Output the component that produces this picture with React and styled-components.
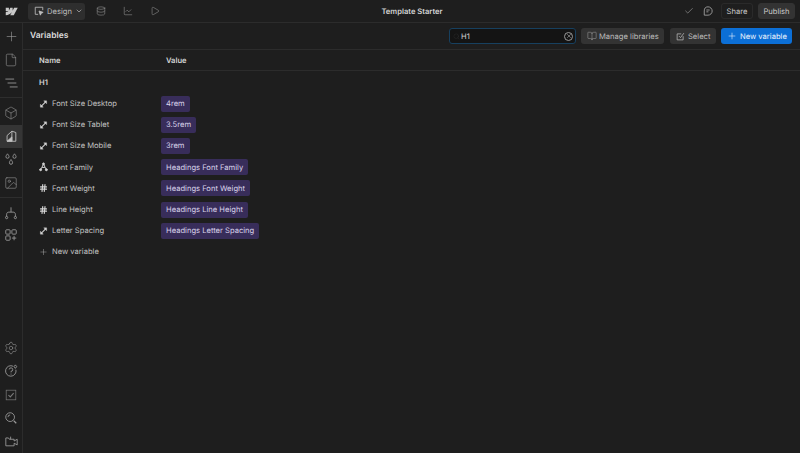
import styled, { createGlobalStyle } from "styled-components";
import {
  Plus,
  File,
  Box,
  Database,
  LineChart,
  Play,
  Check,
  BookOpen,
  ChevronDown,
  Hash,
  X,
  Search,
  Settings,
  Image,
} from "lucide-react";

const GlobalStyle = createGlobalStyle`
  html, body {
    margin: 0;
    padding: 0;
    background: #1e1e1e;
    overflow: hidden;
  }
  * {
    box-sizing: border-box;
  }
`;

const Page = styled.div`
  width: 800px;
  height: 453px;
  display: flex;
  flex-direction: column;
  background: #1e1e1e;
  color: #d9d9d9;
  font-family: Inter, "Liberation Sans", sans-serif;
  font-size: 7.6px;
  text-rendering: geometricPrecision;
`;

const TopBar = styled.header`
  height: 23px;
  display: flex;
  align-items: center;
  position: relative;
  flex-shrink: 0;
  border-bottom: 1px solid #2c2c2c;
`;

const LogoCell = styled.div`
  width: 23px;
  height: 22px;
  display: flex;
  align-items: center;
  justify-content: center;
  color: #c9c9c9;
`;

const DesignButton = styled.div`
  margin-left: 5px;
  width: 57px;
  height: 17px;
  border-radius: 3px;
  background: #2e2e2e;
  display: flex;
  align-items: center;
  gap: 3px;
  padding-left: 6px;
  color: #bdbdbd;
`;

const TopIcons = styled.div`
  display: flex;
  align-items: center;
  gap: 17px;
  margin-left: 11px;
  color: #a3a3a3;
`;

const Title = styled.div`
  position: absolute;
  left: 0;
  right: 0;
  padding-left: 24px;
  text-align: center;
  font-weight: 600;
  color: #d4d4d4;
`;

const TopRight = styled.div`
  margin-left: auto;
  display: flex;
  align-items: center;
  gap: 9px;
  color: #a8a8a8;
  padding-right: 5px;
`;

const PublishGroup = styled.div`
  display: flex;
  gap: 5px;
  margin-left: -1px;
`;

const TopButton = styled.div`
  height: 16px;
  width: ${(p) => p.$width};
  display: flex;
  align-items: center;
  justify-content: center;
  border: 1px solid ${(p) => (p.$filled ? "#333" : "#2a2a2a")};
  border-radius: 3px;
  background: ${(p) => (p.$filled ? "#333" : "transparent")};
  color: #c8c8c8;
`;

const Body = styled.div`
  flex: 1;
  display: flex;
  min-height: 0;
`;

const Sidebar = styled.nav`
  width: 23px;
  flex-shrink: 0;
  display: flex;
  flex-direction: column;
  border-right: 1px solid #2c2c2c;
  color: #9a9a9a;
`;

const SideGroup = styled.div`
  display: flex;
  flex-direction: column;
  padding: ${(p) => p.$pad || "0"};
  border-bottom: ${(p) => (p.$divider ? "1px solid #2e2e2e" : "none")};
  margin-top: ${(p) => (p.$bottom ? "auto" : "0")};
`;

const SideItem = styled.div`
  height: ${(p) => (p.$compact ? "22px" : "23.4px")};
  display: flex;
  align-items: center;
  justify-content: center;
  background: ${(p) => (p.$active ? "#353535" : "transparent")};
  color: ${(p) => (p.$active ? "#c4c4c4" : "inherit")};
`;

const Main = styled.main`
  flex: 1;
  display: flex;
  flex-direction: column;
  min-width: 0;
`;

const Toolbar = styled.div`
  height: 27px;
  display: flex;
  align-items: center;
  padding: 0 8px 0 7px;
  border-bottom: 1px solid #2c2c2c;
  flex-shrink: 0;
`;

const PanelTitle = styled.div`
  font-size: 8.5px;
  font-weight: 600;
  color: #dcdcdc;
  margin-right: auto;
`;

const SearchBox = styled.div`
  width: 127px;
  height: 16px;
  border: 1px solid #17405f;
  border-radius: 3px;
  background: #141414;
  display: flex;
  align-items: center;
  padding: 0 2px 0 3px;
  gap: 1px;
  color: #d4d4d4;
`;

const SearchText = styled.span`
  flex: 1;
`;

const ClearIcon = styled.span`
  width: 9px;
  height: 9px;
  border-radius: 50%;
  border: 1px solid #9a9a9a;
  display: flex;
  align-items: center;
  justify-content: center;
  color: #c9c9c9;
`;

const ToolButton = styled.div`
  width: ${(p) => p.$width};
  height: 16px;
  margin-left: ${(p) => p.$gap || "5px"};
  padding-left: 6px;
  display: flex;
  align-items: center;
  gap: ${(p) => p.$iconGap || "3px"};
  border-radius: 3px;
  background: ${(p) => (p.$primary ? "#0c6fd6" : "#333")};
  color: ${(p) => (p.$primary ? "#eef5fd" : "#bcbcbc")};
`;

const Table = styled.div`
  flex: 1;
  display: flex;
  flex-direction: column;
`;

const HeadRow = styled.div`
  height: 21px;
  display: grid;
  grid-template-columns: 127px 1fr;
  align-items: center;
  padding-left: 16px;
  font-weight: 600;
  color: #d4d4d4;
  border-bottom: 1px solid #2c2c2c;
`;

const GroupRow = styled.div`
  height: 22px;
  display: flex;
  align-items: center;
  padding-left: 16px;
  font-weight: 600;
  color: #d4d4d4;
`;

const Row = styled.div`
  height: 21.2px;
  display: grid;
  grid-template-columns: 122px 1fr;
  align-items: center;
  padding-left: 16px;
  color: #bdbdbd;
`;

const NameCell = styled.div`
  display: flex;
  align-items: center;
  gap: 4px;
  color: #c2c2c2;
`;

const IconSlot = styled.span`
  width: 9px;
  display: flex;
  align-items: center;
  justify-content: center;
  color: #d4d4d4;
`;

const Pill = styled.span`
  justify-self: start;
  height: 16px;
  display: flex;
  align-items: center;
  padding: 0 5px;
  border-radius: 2px;
  background: #382d5a;
  color: #d8d3ea;
`;

function WebflowLogo() {
  return (
    <svg width="13" height="9" viewBox="0 0 26 16" fill="currentColor">
      <path d="M25.5 0.5 17.5 15.5H10.4L13.6 9.4H13.4C10.8 12.8 6.9 15 1.5 15.5V9.5C1.5 9.5 5 9.3 7 7.2H1.5V0.5H7.8V6H8L10.6 0.5H15.3V6H15.5L18.2 0.5H25.5Z" />
    </svg>
  );
}

function DesignIcon() {
  return (
    <svg width="10" height="10" viewBox="0 0 12 12" fill="none" stroke="currentColor" strokeWidth="1">
      <path d="M5 10H1.5V1.5H10.5V5" />
      <path d="M6 6 11 7.6 8.8 8.8 7.6 11Z" fill="currentColor" />
    </svg>
  );
}

function CommentIcon() {
  return (
    <svg width="10" height="10" viewBox="0 0 12 12" fill="none" stroke="currentColor" strokeWidth="1">
      <path d="M6 1A5 5 0 1 1 6 11H1.5V6A4.5 5 0 0 1 6 1Z" />
      <path d="M4 4.8H8M4 7H6.5" />
    </svg>
  );
}

function SelectIcon() {
  return (
    <svg width="9" height="9" viewBox="0 0 12 12" fill="none" stroke="currentColor" strokeWidth="1">
      <path d="M9.5 5.5V10.5H1.5V2.5H7" />
      <path d="M4 5.5 6 7.5 10.5 1.5" />
    </svg>
  );
}

function ChecklistIcon() {
  return (
    <svg width="14" height="14" viewBox="0 0 16 16" fill="none" stroke="currentColor" strokeWidth="0.8" opacity="0.75">
      <rect x="2.5" y="2.5" width="11" height="11" />
      <path d="M5 8 7.2 10.2 11 5.8" strokeWidth="1.2" />
    </svg>
  );
}

function LibraryIcon() {
  return (
    <svg width="14" height="14" viewBox="0 0 16 16" fill="none" stroke="currentColor" strokeWidth="1">
      <path d="M9 2.5 13.5 4V14H3.5V7.5L9 2.5Z" />
      <path d="M9 2.5V14" />
      <path d="M3.5 14 9 9V14Z" fill="currentColor" />
    </svg>
  );
}

function DropsIcon() {
  return (
    <svg width="14" height="15" viewBox="0 0 16 16" fill="none" stroke="currentColor" strokeWidth="1">
      <path d="M4 1.5C5 3 5.8 3.8 5.8 4.8A1.8 1.8 0 0 1 2.2 4.8C2.2 3.8 3 3 4 1.5Z" />
      <path d="M12 1.5C13 3 13.8 3.8 13.8 4.8A1.8 1.8 0 0 1 10.2 4.8C10.2 3.8 11 3 12 1.5Z" />
      <path d="M8 8C9 9.5 9.8 10.5 9.8 11.7A1.8 1.8 0 0 1 6.2 11.7C6.2 10.5 7 9.5 8 8Z" />
    </svg>
  );
}

function FlowIcon() {
  return (
    <svg width="14" height="14" viewBox="0 0 16 16" fill="none" stroke="currentColor" strokeWidth="1">
      <path d="M8 1.5V7M3 12V9.5C3 8 4 7 5.5 7H10.5C12 7 13 8 13 9.5V12" />
      <circle cx="3" cy="13.2" r="1.3" />
      <circle cx="13" cy="13.2" r="1.3" />
    </svg>
  );
}

function ComponentsIcon() {
  return (
    <svg width="14" height="14" viewBox="0 0 16 16" fill="none" stroke="currentColor" strokeWidth="1">
      <rect x="2" y="2" width="5" height="5" rx="1" />
      <rect x="9" y="2" width="5" height="5" rx="1" />
      <rect x="2" y="9" width="5" height="5" rx="1" />
      <path d="M11.5 9V14M9 11.5H14" />
    </svg>
  );
}

function HelpIcon() {
  return (
    <svg width="14" height="14" viewBox="0 0 16 16" fill="none" stroke="currentColor" strokeWidth="1">
      <path d="M10.5 2.6A6 6 0 1 0 13.6 6.5" />
      <path d="M6 6.2A2 2 0 1 1 8 8.4V9.6M8 11V12" />
      <path d="M13 1 14.5 3 13 5 11.5 3Z" />
    </svg>
  );
}

function AuditIcon() {
  return (
    <svg width="14" height="14" viewBox="0 0 16 16" fill="none" stroke="currentColor" strokeWidth="1">
      <circle cx="7" cy="7" r="5" />
      <path d="M11 11 14 14" strokeWidth="1.5" />
      <path d="M4.5 7A2.5 2.5 0 0 1 7 4.5" />
    </svg>
  );
}

function VideoIcon() {
  return (
    <svg width="15" height="14" viewBox="0 0 16 16" fill="none" stroke="currentColor" strokeWidth="1">
      <path d="M1.5 4.5H4.5L5.5 6H11V8L14.5 6V12.5L11 10.5V13.5H1.5Z" />
      <path d="M7 3V6" />
    </svg>
  );
}

function NavigatorIcon() {
  return (
    <svg width="15" height="14" viewBox="0 0 16 16" fill="none" stroke="currentColor" strokeWidth="1">
      <path d="M1 3.5H11M3.5 8H13.5M6 12.5H15" />
    </svg>
  );
}

function SizeIcon() {
  return (
    <svg width="10" height="10" viewBox="0 0 10 10" fill="none" stroke="currentColor" strokeWidth="1.2">
      <path d="M2.4 7.6 7.6 2.4" />
      <path d="M5.2 1.5H8.5V4.8Z" fill="currentColor" strokeWidth="0.4" />
      <path d="M1.5 5.2V8.5H4.8Z" fill="currentColor" strokeWidth="0.4" />
    </svg>
  );
}

function FontIcon() {
  return (
    <svg width="10" height="10" viewBox="0 0 10 10" fill="none" stroke="currentColor" strokeWidth="1.1">
      <path d="M5 1.5 2.5 7M5 1.5 7.5 7M3.5 5.5H6.5" />
      <circle cx="5" cy="1.5" r="1" fill="currentColor" />
      <circle cx="1.8" cy="8" r="1.1" fill="currentColor" />
      <circle cx="8.2" cy="8" r="1.1" fill="currentColor" />
    </svg>
  );
}

const variables = [
  { name: "Font Size Desktop", value: "4rem", type: "size" },
  { name: "Font Size Tablet", value: "3.5rem", type: "size" },
  { name: "Font Size Mobile", value: "3rem", type: "size" },
  { name: "Font Family", value: "Headings Font Family", type: "font" },
  { name: "Font Weight", value: "Headings Font Weight", type: "number" },
  { name: "Line Height", value: "Headings Line Height", type: "number" },
  { name: "Letter Spacing", value: "Headings Letter Spacing", type: "size" },
];

function TypeIcon({ type }) {
  if (type === "font") return <FontIcon />;
  if (type === "number") return <Hash size={10} strokeWidth={3} />;
  return <SizeIcon />;
}

export default function App() {
  return (
    <Page>
      <GlobalStyle />
      <TopBar>
        <LogoCell>
          <WebflowLogo />
        </LogoCell>
        <DesignButton>
          <DesignIcon />
          Design
          <ChevronDown size={8} />
        </DesignButton>
        <TopIcons>
          <Database size={10} strokeWidth={1.2} />
          <LineChart size={10} strokeWidth={1.2} />
          <Play size={10} strokeWidth={1.2} />
        </TopIcons>
        <Title>Template Starter</Title>
        <TopRight>
          <Check size={10} strokeWidth={1.4} />
          <CommentIcon />
          <PublishGroup>
            <TopButton $width="32px">Share</TopButton>
            <TopButton $width="37px" $filled>
              Publish
            </TopButton>
          </PublishGroup>
        </TopRight>
      </TopBar>
      <Body>
        <Sidebar>
          <SideGroup $divider $pad="2px 0 2px">
            <SideItem>
              <Plus size={15} strokeWidth={1} />
            </SideItem>
            <SideItem>
              <File size={14} strokeWidth={1} />
            </SideItem>
            <SideItem>
              <NavigatorIcon />
            </SideItem>
          </SideGroup>
          <SideGroup $divider $pad="3px 0 2px">
            <SideItem>
              <Box size={14} strokeWidth={1} />
            </SideItem>
            <SideItem $active>
              <LibraryIcon />
            </SideItem>
            <SideItem>
              <DropsIcon />
            </SideItem>
            <SideItem>
              <Image size={14} strokeWidth={1} />
            </SideItem>
          </SideGroup>
          <SideGroup $pad="4px 0 0">
            <SideItem $compact>
              <FlowIcon />
            </SideItem>
            <SideItem $compact>
              <ComponentsIcon />
            </SideItem>
          </SideGroup>
          <SideGroup $bottom>
            <SideItem>
              <Settings size={14} strokeWidth={1} />
            </SideItem>
            <SideItem>
              <HelpIcon />
            </SideItem>
            <SideItem>
              <ChecklistIcon />
            </SideItem>
            <SideItem>
              <AuditIcon />
            </SideItem>
            <SideItem>
              <VideoIcon />
            </SideItem>
          </SideGroup>
        </Sidebar>
        <Main>
          <Toolbar>
            <PanelTitle>Variables</PanelTitle>
            <SearchBox>
              <Search size={7} strokeWidth={1} color="#3a3a3a" />
              <SearchText>H1</SearchText>
              <ClearIcon>
                <X size={6} strokeWidth={2} />
              </ClearIcon>
            </SearchBox>
            <ToolButton $width="83px" $iconGap="2px">
              <BookOpen size={10} strokeWidth={1} />
              Manage libraries
            </ToolButton>
            <ToolButton $width="46px" $gap="6px">
              <SelectIcon />
              Select
            </ToolButton>
            <ToolButton $width="71px" $primary>
              <Plus size={10} strokeWidth={1.4} />
              New variable
            </ToolButton>
          </Toolbar>
          <Table>
            <HeadRow>
              <span>Name</span>
              <span>Value</span>
            </HeadRow>
            <GroupRow>H1</GroupRow>
            {variables.map((v) => (
              <Row key={v.name}>
                <NameCell>
                  <IconSlot>
                    <TypeIcon type={v.type} />
                  </IconSlot>
                  {v.name}
                </NameCell>
                <Pill>{v.value}</Pill>
              </Row>
            ))}
            <Row>
              <NameCell>
                <IconSlot>
                  <Plus size={10} strokeWidth={1} />
                </IconSlot>
                New variable
              </NameCell>
            </Row>
          </Table>
        </Main>
      </Body>
    </Page>
  );
}
